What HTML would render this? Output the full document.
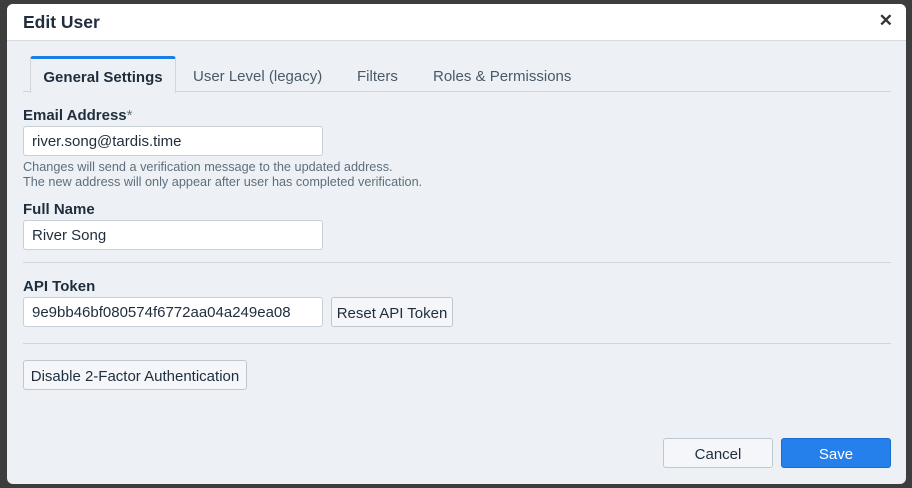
<!DOCTYPE html>
<html><head><style>
*{box-sizing:border-box;margin:0;padding:0}
body{width:912px;height:488px;background:#3d3d3d;font-family:"Liberation Sans",sans-serif;position:relative;overflow:hidden;color:#1f2d3d}
.m{position:absolute;left:7px;top:4px;width:899px;height:480px;background:#edf1f5;border-radius:6px;overflow:hidden}
.h{height:37px;background:#fff;border-bottom:1px solid #d5dbe1;position:relative}
.h .t{position:absolute;left:16px;top:8px;font-size:17.5px;font-weight:bold;color:#1f2d3d}
.x{position:absolute;right:13px;top:7px;font-size:17px;color:#333;font-weight:bold}
.a{position:absolute}
.tabs{left:16px;top:87px;width:868px;border-bottom:1px solid #cfd6dd}
.tab{position:absolute;top:53px;height:35px;font-size:15px;color:#4a5968;padding-top:11px}
.tab.on{left:23px;width:146px;background:#edf1f5;border:1px solid #cfd6dd;border-bottom:none;border-top:3px solid #1a7de8;border-radius:3px 3px 0 0;color:#1f2d3d;font-weight:bold;text-align:center;top:52px;height:37px;padding-top:10px}
.lbl{font-size:15px;font-weight:bold;color:#1f2d3d}
.in{background:#fff;border:1px solid #c7cfd7;border-radius:3px;height:30px;width:300px;font-size:15px;padding:6px 8px;color:#1f2d3d}
.hint{font-size:12.7px;color:#5f6e7c;line-height:15px}
.hr{left:16px;width:868px;border-top:1px solid #cfd6dd}
.btn{background:#f4f6f9;border:1px solid #bfc8d1;border-radius:3px;font-size:15px;text-align:center;color:#1f2d3d;height:30px;padding-top:7px}
</style></head><body>
<div class="m">
<div class="h"><div class="t">Edit User</div><div class="x">✕</div></div>
<div class="a tabs"></div>
<div class="tab on">General Settings</div>
<div class="tab" style="left:186px">User Level (legacy)</div>
<div class="tab" style="left:350px">Filters</div>
<div class="tab" style="left:426px">Roles &amp; Permissions</div>
<div class="a lbl" style="left:16px;top:103px">Email Address<span style="font-weight:normal;color:#5f6e7c">*</span></div>
<div class="a in" style="left:16px;top:122px">river.song@tardis.time</div>
<div class="a hint" style="left:16px;top:156px">Changes will send a verification message to the updated address.<br>The new address will only appear after user has completed verification.</div>
<div class="a lbl" style="left:16px;top:197px">Full Name</div>
<div class="a in" style="left:16px;top:216px">River Song</div>
<div class="a hr" style="top:258px"></div>
<div class="a lbl" style="left:16px;top:274px">API Token</div>
<div class="a in" style="left:16px;top:293px">9e9bb46bf080574f6772aa04a249ea08</div>
<div class="a btn" style="left:324px;top:293px;width:122px">Reset API Token</div>
<div class="a hr" style="top:339px"></div>
<div class="a btn" style="left:16px;top:356px;width:224px">Disable 2-Factor Authentication</div>
<div class="a btn" style="left:656px;top:434px;width:110px;height:30px">Cancel</div>
<div class="a btn" style="left:774px;top:434px;width:110px;background:#2680eb;border-color:#1a6cd0;color:#fff">Save</div>
</div>
</body></html>
